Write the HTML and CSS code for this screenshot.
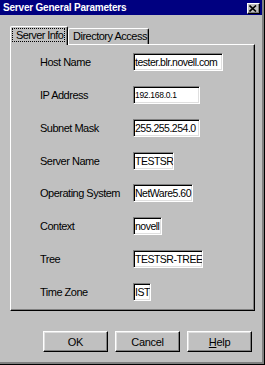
FILE: index.html
```html
<!DOCTYPE html>
<html>
<head>
<meta charset="utf-8">
<link rel="stylesheet" href="styles.css">
</head>
<body>
<div class="window">
  <div class="titlebar">
    <span class="title">Server General Parameters</span>
    <span class="close"><svg width="8" height="7" viewBox="0 0 8 7"><path d="M0.5 0.5 L7 6.5 M7 0.5 L0.5 6.5" stroke="#000" stroke-width="1.6" fill="none"/></svg></span>
  </div>
  <div class="content">
    <div class="tabs">
      <div class="tab active"><span class="focus">Server Info</span></div>
      <div class="tab">Directory Access</div>
    </div>
    <div class="panel">
      <div class="form">
        <span class="label">Host Name</span><span class="field w90">tester.blr.novell.com</span>
        <span class="label">IP Address</span><span class="field w67 small">192.168.0.1</span>
        <span class="label">Subnet Mask</span><span class="field w67">255.255.254.0</span>
        <span class="label">Server Name</span><span class="field w41">TESTSR</span>
        <span class="label">Operating System</span><span class="field w60">NetWare5.60</span>
        <span class="label">Context</span><span class="field w29">novell</span>
        <span class="label">Tree</span><span class="field w70">TESTSR-TREE</span>
        <span class="label">Time Zone</span><span class="field w18">IST</span>
      </div>
    </div>
    <div class="buttons">
      <button class="btn">OK</button>
      <button class="btn">Cancel</button>
      <button class="btn"><u>H</u>elp</button>
    </div>
  </div>
</div>
</body>
</html>
```
FILE: styles.css
```css
html, body {
  margin: 0;
  padding: 0;
  background: #c0c0c0;
}
body {
  font-family: "Liberation Sans", Arial, sans-serif;
  font-size: 11px;
  letter-spacing: -0.5px;
  color: #000;
}
.window {
  width: 265px;
  height: 365px;
  box-sizing: border-box;
  background: #c0c0c0;
  border-right: 1px solid #000;
  border-bottom: 1px solid #000;
  box-shadow: inset -2px -2px #808080;
  padding: 0 2px 2px 0;
  display: flex;
  flex-direction: column;
}
.titlebar {
  height: 15px;
  background: #000080;
  display: flex;
  justify-content: space-between;
  align-items: flex-start;
  flex: none;
}
.title {
  color: #fff;
  font-weight: bold;
  font-size: 10px;
  letter-spacing: -0.2px;
  line-height: 15px;
  padding-left: 3px;
}
.close {
  width: 13px;
  height: 11px;
  margin-top: 3px;
  margin-right: 2px;
  box-sizing: border-box;
  background: #c0c0c0;
  border-top: 1px solid #fff;
  border-left: 1px solid #fff;
  border-right: 1px solid #000;
  border-bottom: 1px solid #000;
  box-shadow: inset -1px -1px #808080;
  display: flex;
  align-items: center;
  justify-content: center;
}
.close svg { display: block; margin-right: 1px; }
.content {
  padding: 11px 0 0 10px;
  display: flex;
  flex-direction: column;
}
.tabs {
  display: flex;
  align-items: flex-end;
  height: 18px;
  position: relative;
  z-index: 1;
}
.tab {
  box-sizing: border-box;
  height: 16px;
  padding: 0 4px 0 4px;
  border-top: 1px solid #fff;
  border-left: 1px solid #fff;
  border-right: 1px solid #000;
  border-radius: 2px 2px 0 0;
  box-shadow: inset -1px 0 #808080;
  line-height: 15px;
  white-space: nowrap;
  width: 81px;
}
.tab.active {
  width: 58px;
  height: 19px;
  margin-bottom: -1px;
  background: #c0c0c0;
  padding: 2px 3px 0 2px;
  line-height: 12px;
  letter-spacing: -0.6px;
}
.focus {
  display: block;
  outline: 1px dotted #000;
  padding: 0 1px 0 3px;
  line-height: 12px;
}
.panel {
  width: 245px;
  height: 267px;
  box-sizing: border-box;
  border-top: 1px solid #fff;
  border-left: 1px solid #fff;
  border-right: 1px solid #000;
  border-bottom: 1px solid #000;
  box-shadow: inset -1px -1px #808080;
}
.form {
  display: grid;
  grid-template-columns: 93px auto;
  grid-auto-rows: 18px;
  row-gap: 14.86px;
  padding: 8px 0 0 29px;
  align-items: center;
  justify-items: start;
}
.label {
  line-height: 18px;
  white-space: nowrap;
}
.field {
  height: 18px;
  box-sizing: border-box;
  background: #fff;
  border-top: 1px solid #808080;
  border-left: 1px solid #808080;
  border-right: 1px solid #fff;
  border-bottom: 1px solid #fff;
  box-shadow: inset 1px 1px #000, inset -1px -1px #dfdfdf;
  padding-left: 1px;
  font-size: 10.5px;
  letter-spacing: -0.5px;
  line-height: 16px;
  white-space: nowrap;
  overflow: hidden;
}
.field.small {
  font-size: 8.5px;
  letter-spacing: -0.3px;
}
.w90 { width: 90px; }
.w67 { width: 67px; }
.w41 { width: 41px; }
.w60 { width: 60px; }
.w29 { width: 29px; }
.w70 { width: 70px; }
.w18 { width: 18px; }
.buttons {
  display: flex;
  justify-content: flex-end;
  gap: 7px;
  margin-top: 20px;
  padding-right: 3px;
  width: 245px;
  box-sizing: border-box;
}
.btn {
  width: 65px;
  height: 21px;
  box-sizing: border-box;
  background: #c0c0c0;
  font-family: "Liberation Sans", Arial, sans-serif;
  font-size: 11px;
  letter-spacing: -0.3px;
  color: #000;
  border-top: 1px solid #fff;
  border-left: 1px solid #fff;
  border-right: 1px solid #000;
  border-bottom: 1px solid #000;
  box-shadow: inset -1px -1px #808080, inset 1px 1px #dfdfdf;
  padding: 0;
  margin: 0;
}
```
